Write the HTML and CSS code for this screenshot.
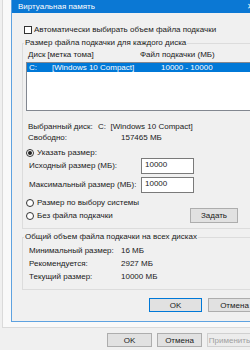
FILE: index.html
```html
<!DOCTYPE html>
<html>
<head>
    <title>Виртуальная память</title>
    <meta charset="UTF-8">
    <link rel="stylesheet" href="styles.css">
</head>
<body>
    <div class="sheet"></div>
    <div class="footer">
        <button class="btn">OK</button>
        <button class="btn">Отмена</button>
        <button class="btn" disabled>Применить</button>
    </div>

    <div class="dialog">
        <div class="titlebar">
            <span class="title">Виртуальная память</span>
            <span class="close">✕</span>
        </div>
        <div class="dialog-body">
            <label class="check-row">
                <span class="checkbox"></span>
                Автоматически выбирать объем файла подкачки
            </label>

            <fieldset class="group">
                <legend>Размер файла подкачки для каждого диска</legend>
                <div class="list-head">
                    <span>Диск [метка тома]</span>
                    <span>Файл подкачки (МБ)</span>
                </div>
                <div class="listbox">
                    <div class="list-row selected">
                        <span>C:</span>
                        <span>[Windows 10 Compact]</span>
                        <span>10000 - 10000</span>
                    </div>
                </div>

                <div class="info">
                    <span>Выбранный диск:</span>
                    <span>C:&nbsp; [Windows 10 Compact]</span>
                    <span>Свободно:</span>
                    <span class="free">157465 МБ</span>
                </div>

                <div class="radio-row first">
                    <span class="radio checked"></span>
                    Указать размер:
                </div>
                <div class="field-row">
                    <span class="field-label">Исходный размер (МБ):</span>
                    <span class="input">10000</span>
                </div>
                <div class="field-row second">
                    <span class="field-label">Максимальный размер (МБ):</span>
                    <span class="input">10000</span>
                </div>
                <div class="radio-row system">
                    <span class="radio"></span>
                    Размер по выбору системы
                </div>
                <div class="set-row">
                    <div class="radio-row none">
                        <span class="radio"></span>
                        Без файла подкачки
                    </div>
                    <button class="btn set">Задать</button>
                </div>
            </fieldset>

            <fieldset class="group total">
                <legend>Общий объем файла подкачки на всех дисках</legend>
                <div class="totals">
                    <span>Минимальный размер:</span>
                    <span>16 МБ</span>
                    <span>Рекомендуется:</span>
                    <span>2927 МБ</span>
                    <span>Текущий размер:</span>
                    <span>10000 МБ</span>
                </div>
            </fieldset>

            <div class="dialog-buttons">
                <button class="btn default">OK</button>
                <button class="btn">Отмена</button>
            </div>
        </div>
    </div>
</body>
</html>
```

FILE: styles.css
```css
body {
    margin: 0;
    width: 250px;
    height: 350px;
    overflow: hidden;
    position: relative;
    background-color: #f0f0f0;
    font-family: "Liberation Sans", Arial, sans-serif;
    font-size: 8px;
    line-height: 10px;
    color: #1a1a1a;
}
.sheet {
    margin-left: 2px;
    height: 327px;
    background-color: #f9f9f9;
    border-left: 1px solid #dadada;
    border-bottom: 1px solid #dadada;
}
.footer {
    display: flex;
    gap: 5px;
    margin-top: 5px;
    padding-left: 107px;
}
.footer .btn {
    width: 45px;
    flex: none;
}
.btn {
    height: 14px;
    padding: 0;
    font-family: inherit;
    font-size: 8px;
    color: #1a1a1a;
    background-color: #e1e1e1;
    border: 1px solid #adadad;
}
.btn:disabled {
    color: #a0a0a0;
    background-color: #ececec;
    border-color: #d0d0d0;
}
.dialog {
    position: absolute;
    left: 11px;
    top: 0;
    width: 262px;
    height: 322px;
    box-sizing: border-box;
    background-color: #f0f0f0;
    border-left: 1px solid #5ea2e0;
    border-bottom: 1px solid #5ea2e0;
}
.titlebar {
    height: 13px;
    background-color: #0b78d4;
    color: white;
    display: flex;
    align-items: center;
    padding-left: 6px;
}
.title {
    flex: 1;
    line-height: 11px;
}
.close {
    margin-right: 19px;
    font-size: 8px;
}
.dialog-body {
    padding: 12px 0 0 10px;
}
.check-row {
    display: flex;
    align-items: center;
    gap: 2px;
    margin-left: 2px;
}
.checkbox {
    width: 6px;
    height: 6px;
    border: 1px solid #333;
    background-color: white;
}
.group {
    margin: 3px 0 0 0;
    padding: 2px 0 5px 3px;
    border: 1px solid #dcdcdc;
    min-width: 0;
}
.group legend {
    padding: 0 1px;
    margin-left: -2px;
    line-height: 10px;
}
.list-head {
    display: grid;
    grid-template-columns: 112px auto;
    padding-left: 2px;
}
.listbox {
    margin-top: 2px;
    height: 47px;
    background-color: white;
    border: 1px solid #828790;
}
.list-row {
    display: grid;
    grid-template-columns: 23px 109px auto;
    padding-left: 2px;
    line-height: 9px;
}
.list-row.selected {
    background-color: #0078d7;
    color: white;
}
.info {
    display: grid;
    grid-template-columns: 70px auto;
    margin-top: 10px;
    padding-left: 2px;
    line-height: 11px;
}
.info .free {
    padding-left: 23px;
}
.radio-row {
    display: flex;
    align-items: center;
    gap: 3px;
}
.radio-row.first {
    margin-top: 5px;
}
.radio-row.system {
    margin-top: 5px;
}
.radio {
    width: 6px;
    height: 6px;
    border: 1px solid #333;
    border-radius: 50%;
    background-color: white;
    display: flex;
    align-items: center;
    justify-content: center;
}
.radio.checked::after {
    content: "";
    width: 4px;
    height: 4px;
    border-radius: 50%;
    background-color: #222;
}
.field-row {
    display: flex;
    align-items: center;
    padding-left: 3px;
}
.field-row.second {
    margin-top: 3px;
}
.field-label {
    width: 112px;
    flex: none;
}
.input {
    width: 48px;
    height: 14px;
    line-height: 12px;
    padding-left: 3px;
    background-color: white;
    border: 1px solid #7a7a7a;
}
.set-row {
    display: flex;
    align-items: center;
    height: 15px;
}
.set-row .radio-row {
    width: 164px;
    flex: none;
}
.btn.set {
    width: 48px;
    height: 15px;
}
.group.total {
    padding-bottom: 6px;
}
.totals {
    display: grid;
    grid-template-columns: 92px auto;
    padding-left: 3px;
    line-height: 13px;
}
.dialog-buttons {
    display: flex;
    gap: 6px;
    margin-top: 8px;
    padding-left: 127px;
}
.dialog-buttons .btn {
    width: 53px;
}
.btn.default {
    border-color: #0078d7;
}
```
